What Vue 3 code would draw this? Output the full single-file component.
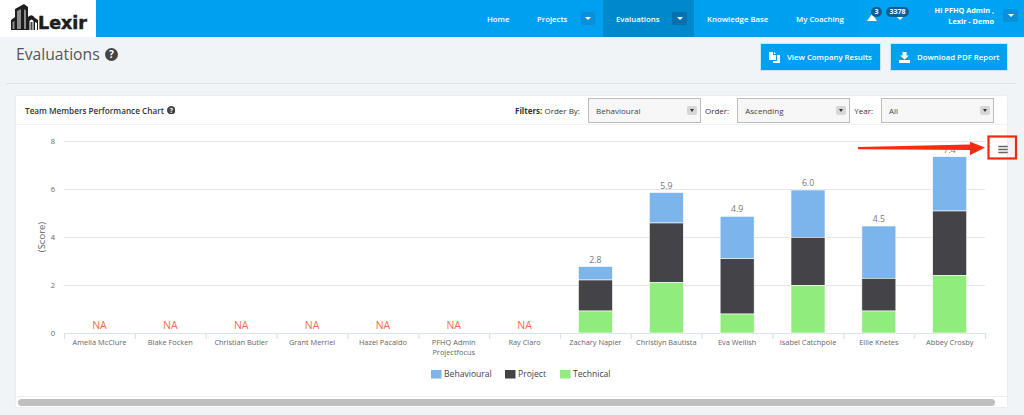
<script setup>
const left = 99.5
const step = 70.85
const names = [['Amelia McClure'],['Blake Focken'],['Christian Butler'],['Grant Merriel'],['Hazel Pacaldo'],['PFHQ Admin','Projectfocus'],['Ray Claro'],['Zachary Napier'],['Christlyn Bautista'],['Eva Wellish'],['Isabel Catchpole'],['Ellie Knetes'],['Abbey Crosby']]
const cats = names.map((lines, i) => ({ lines, x: left + step * i }))
const ticks = [{ v: 8, y: 141.5 }, { v: 6, y: 189.5 }, { v: 4, y: 237.5 }, { v: 2, y: 285.5 }, { v: 0, y: 333.5 }]
const seps = Array.from({ length: 14 }, (_, i) => 64.5 + step * i)
const bars = [
  { i: 7, label: '2.8', top: 266.5, dark: 280, green: 311 },
  { i: 8, label: '5.9', top: 192.5, dark: 223, green: 282.7 },
  { i: 9, label: '4.9', top: 216.3, dark: 258.7, green: 314 },
  { i: 10, label: '6.0', top: 190, dark: 237.3, green: 285.3 },
  { i: 11, label: '4.5', top: 226, dark: 278.3, green: 311 },
  { i: 12, label: '7.4', top: 156.7, dark: 211, green: 275.3 }
].map(b => ({ ...b, x: left + step * b.i - 17 }))
const legend = [
  { name: 'Behavioural', color: '#7cb5ec', x: 431 },
  { name: 'Project', color: '#434348', x: 505 },
  { name: 'Technical', color: '#90ed7d', x: 560 }
]
const filters = [
  { label: 'Order:', value: 'Ascending' },
  { label: 'Year:', value: 'All' }
]
</script>

<template>
  <div class="page">
    <header class="topbar">
      <div class="logo">
        <svg width="27" height="26" viewBox="0 0 27 26" class="logo-mark">
          <path d="M0 26V16L4 13V5L13 0L17 3V13Q21 9 24 14L27 16V26z" fill="#1d1d1d" />
          <path d="M6 25V7L10 5V25zM1.500 25V18L3.500 17V25zM13 25V5L15 6.500V25z" fill="#8d8d8d" />
          <path d="M18.500 26V17Q20.500 14 22.500 17V26zM24 26V18L26 19V26z" fill="#fff" />
          <path d="M19.500 26V18H21.500V26z" fill="#444" />
        </svg>
        <span class="logo-text">Lexir</span>
      </div>
      <nav class="nav">
        <a class="nav-item home">Home</a>
        <a class="nav-item projects">Projects</a>
        <span class="caret-btn"><i></i></span>
        <div class="nav-active">
          <a class="nav-item">Evaluations</a>
          <span class="caret-btn dark"><i></i></span>
        </div>
        <a class="nav-item kb">Knowledge Base</a>
        <a class="nav-item coaching">My Coaching</a>
      </nav>
      <div class="user-zone">
        <div class="notes">
          <svg class="note-icon tri" width="10" height="7" viewBox="0 0 10 7"><path d="M5 0l5 7H0z" fill="#fff" /></svg>
          <span class="badge one">3</span>
          <svg class="note-icon heart" width="8" height="5" viewBox="0 0 8 5"><path d="M0 0h3l1 1 1-1h3v1L4 5 0 1z" fill="#fff" /></svg>
          <span class="badge two">3378</span>
        </div>
        <div class="hello">
          <div>Hi PFHQ Admin ,</div>
          <div>Lexir - Demo</div>
        </div>
        <span class="caret-btn user"><i></i></span>
      </div>
    </header>

    <section class="titlebar">
      <h1 class="title">Evaluations
        <svg class="help big" viewBox="0 0 14 14"><circle cx="7" cy="7" r="7" fill="#444" /><text x="7" y="10.800" text-anchor="middle" class="help-q">?</text></svg>
      </h1>
      <div class="actions">
        <button class="action first">
          <svg width="11" height="11" viewBox="0 0 11 11"><path d="M0 0h4v3h3v5H0z" fill="#fff" /><path d="M5 0l2 2H5zM8 3h3v8H4V9h4z" fill="#fff" /></svg>
          View Company Results
        </button>
        <button class="action second">
          <svg width="11" height="11" viewBox="0 0 11 11"><path d="M3.500 0h4v3.500H10L5.500 7.500 1 3.500h2.500zM0 8h11v3H0z" fill="#fff" /></svg>
          Download PDF Report
        </button>
      </div>
    </section>

    <section class="card">
      <div class="card-head">
        <div class="card-title">Team Members Performance Chart
          <svg class="help small" viewBox="0 0 14 14"><circle cx="7" cy="7" r="7" fill="#444" /><text x="7" y="10.800" text-anchor="middle" class="help-q">?</text></svg>
        </div>
        <div class="filters">
          <span class="f-label"><b>Filters:</b> Order By:</span>
          <div class="select"><span>Behavioural</span><span class="sel-caret"><i></i></span></div>
          <template v-for="f in filters" :key="f.label">
            <span class="f-label">{{ f.label }}</span>
            <div class="select"><span>{{ f.value }}</span><span class="sel-caret"><i></i></span></div>
          </template>
        </div>
      </div>

      <svg class="chart" width="991" height="271" viewBox="16 125 991 271">
        <line v-for="t in ticks" :key="t.v" x1="64" x2="985" :y1="t.y" :y2="t.y" class="grid" />
        <text v-for="t in ticks" :key="'l' + t.v" x="55" :y="t.y + 2" text-anchor="end" class="tick">{{ t.v }}</text>
        <text transform="translate(45 237) rotate(-90)" text-anchor="middle" class="axis-title">(Score)</text>
        <line x1="64" x2="985" y1="333.500" y2="333.500" class="axis" />
        <line v-for="s in seps" :key="s" :x1="s" :x2="s" y1="333" y2="339" class="axis" />
        <template v-for="c in cats" :key="c.lines[0]">
          <text v-for="(l, n) in c.lines" :key="l" :x="c.x" :y="345 + n * 10" text-anchor="middle" class="cat">{{ l }}</text>
        </template>
        <text v-for="c in cats.slice(0, 7)" :key="'na' + c.x" :x="c.x" y="329" text-anchor="middle" class="na">NA</text>
        <g v-for="b in bars" :key="b.i">
          <rect :x="b.x" :y="b.top" width="34" :height="b.dark - b.top" fill="#7cb5ec" class="bar" />
          <rect :x="b.x" :y="b.dark" width="34" :height="b.green - b.dark" fill="#434348" class="bar" />
          <rect :x="b.x" :y="b.green" width="34" :height="333 - b.green" fill="#90ed7d" class="bar" />
          <text :x="b.x + 17" :y="b.top - 4" text-anchor="middle" class="val">{{ b.label }}</text>
        </g>
        <rect x="936" y="142" width="32" height="8" fill="#fff" />
        <g v-for="l in legend" :key="l.name">
          <rect :x="l.x" y="370" width="10.500" height="8.500" :fill="l.color" />
          <text :x="l.x + 13" y="377" class="legend">{{ l.name }}</text>
        </g>
        <path d="M858 147L970 144.500V141.700L985 147.500L970 155.300V150L858 149.200z" fill="#fb2c0c" />
        <rect x="988.500" y="136.500" width="27.500" height="22" fill="none" stroke="#f5260f" stroke-width="2.200" />
        <path d="M998.300 146.500h9.400M998.300 149.500h9.400M998.300 152.500h9.400" stroke="#666" stroke-width="1.500" />
      </svg>

      <div class="scroll"><div class="thumb"></div></div>
    </section>
  </div>
</template>

<style>
html, body { margin: 0; background: #f1f4f7; overflow: hidden; }
</style>

<style scoped>
.page {
  width: 1024px;
  height: 415px;
  overflow: hidden;
  background: #f1f4f7;
  font-family: "Open Sans", "Liberation Sans", sans-serif;
  color: #333;
}
.topbar { display: flex; height: 37px; background: #00a0f1; color: #fff; }
.logo { width: 96px; background: #fff; display: flex; align-items: flex-end; padding: 0 0 7px 11px; box-sizing: border-box; }
.logo-mark { flex: none; }
.logo-text { font-family: "DejaVu Sans", sans-serif; font-weight: 700; font-size: 17.500px; line-height: 14px; color: #1d1d1d; -webkit-text-stroke: 0.500px #1d1d1d; }
.nav { display: flex; align-items: center; margin-left: 391px; font-size: 7.800px; font-weight: 600; white-space: nowrap; }
.nav-item { display: block; }
.home { width: 50px; }
.projects { width: 44px; }
.caret-btn { display: flex; align-items: center; justify-content: center; width: 14px; height: 13px; border-radius: 2px; background: #0a8fd8; }
.caret-btn i { width: 0; height: 0; border: 3px solid transparent; border-top: 3px solid #fff; border-bottom: 0; }
.caret-btn.dark { width: 15px; margin-left: 13px; background: #0670ac; }
.nav > .caret-btn { margin-right: 8px; }
.nav-active { display: flex; align-items: center; height: 37px; padding: 0 7px 0 13px; background: #0088cc; }
.nav-active .nav-item { width: 43px; }
.kb { margin-left: 13px; width: 77px; }
.coaching { margin-left: 12px; width: 48px; }
.user-zone { display: flex; align-items: flex-start; margin-left: 14px; flex: 1; background: #00a3f1; }
.notes { position: relative; width: 79px; height: 37px; }
.note-icon { position: absolute; }
.tri { left: 9px; top: 14px; }
.heart { left: 38px; top: 15px; }
.badge { position: absolute; top: 7px; height: 10px; border-radius: 5px; background: #0c5f92; color: #fff; font-size: 7px; font-weight: 700; line-height: 10px; text-align: center; }
.one { left: 13px; width: 11px; }
.two { left: 28px; width: 23px; }
.hello { width: 57px; padding-top: 5px; font-size: 7.300px; line-height: 10.500px; font-weight: 700; white-space: nowrap; display: flex; flex-direction: column; align-items: flex-end; }
.caret-btn.user { margin: 9px 0 0 9px; width: 15px; flex: none; }
.titlebar { display: flex; justify-content: space-between; height: 46px; margin: 0 8px 0 6px; padding-left: 10px; border-bottom: 1px solid #dfe3e6; }
.title { margin: 7px 0 0; font-size: 15.700px; font-weight: 400; line-height: 20px; color: #555; height: 20px; display: flex; align-items: center; }
.help { display: inline-block; margin-left: 5px; }
.help.big { width: 13px; height: 13px; }
.help.small { width: 8.500px; height: 8.500px; margin-left: 3px; }
.help-q { font: 700 11px "Open Sans", sans-serif; fill: #fff; }
.actions { display: flex; gap: 9px; margin-top: 6px; margin-right: 8px; }
.action { display: flex; align-items: center; gap: 7px; height: 28px; border: 1px solid #c8e6f7; background: #00a0f1; color: #fff; font: 600 7.800px "Open Sans", sans-serif; padding: 0 0 0 8px; box-sizing: border-box; white-space: nowrap; }
.action svg { flex: none; }
.first { width: 121px; }
.second { width: 118px; }
.card { margin: 12px 17px 0 16px; height: 311px; background: #fff; box-shadow: 0 0 2px #dde1e5; }
.card-head { display: flex; justify-content: space-between; align-items: center; height: 29px; padding-left: 9px; box-sizing: border-box; border-bottom: 1px solid #f2f2f2; }
.card-title { font-size: 8.200px; font-weight: 600; color: #333; display: flex; align-items: center; white-space: nowrap; }
.filters { display: flex; align-items: center; padding-right: 13px; font-size: 8px; white-space: nowrap; }
.f-label { margin: 0 8px 0 4px; }
.f-label b { font-weight: 700; }
.select { display: flex; justify-content: space-between; align-items: center; width: 113px; height: 25px; box-sizing: border-box; border: 1px solid #bdbdbd; background: #f7f7f7; padding: 0 3px 0 7px; color: #444; }
.sel-caret { display: flex; align-items: center; justify-content: center; width: 10px; height: 9px; background: #d6d6d6; border-radius: 2px; }
.sel-caret i { width: 0; height: 0; border: 2.500px solid transparent; border-top: 3px solid #333; border-bottom: 0; }
.chart { display: block; overflow: visible; font-family: "Open Sans", sans-serif; }
.grid { stroke: #e6e6e6; stroke-width: 1; }
.axis { stroke: #d8e2ef; stroke-width: 1.200; }
.tick { font-size: 7.500px; fill: #666; }
.axis-title { font-size: 9.500px; fill: #666; }
.cat { font-size: 7.400px; fill: #666; }
.na { font-size: 10.500px; fill: #fb6b4f; }
.val { font-size: 8.700px; fill: #777; }
.bar { stroke: #fff; stroke-width: 0.600; }
.legend { font-size: 8.600px; fill: #444; }
.scroll { height: 11px; border-top: 1px solid #eee; padding: 2px 12px 0 2px; box-sizing: border-box; }
.thumb { height: 7px; border-radius: 4px; background: #bfbfbf; }
</style>
